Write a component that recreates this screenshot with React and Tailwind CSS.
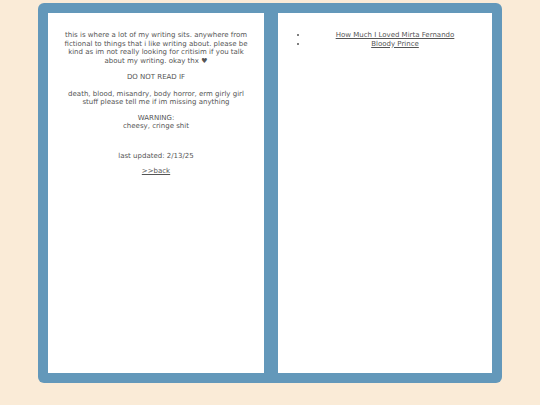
import React from 'react';

const font = { fontFamily: '"DejaVu Sans", "Liberation Sans", sans-serif' };

const stories = ['How Much I Loved Mirta Fernando', 'Bloody Prince'];

export default function App() {
  return (
    <div className="min-h-[405px] w-full bg-[#faebd7] pt-[3px]" style={font}>
      <div className="mx-auto flex h-[380px] w-[464px] gap-[14px] rounded-[6px] bg-[#6398ba] p-[10px]">
        {/* left: about */}
        <div className="w-[216px] shrink-0 bg-white px-[8px] pt-[18px] text-center text-[7px] leading-[8.5px] text-[#555]">
          <p>
            this is where a lot of my writing sits. anywhere from<br />
            fictional to things that i like writing about. please be<br />
            kind as im not really looking for critisim if you talk<br />
            about my writing. okay thx ♥
          </p>
          <p className="mt-[8px]">DO NOT READ IF</p>
          <p className="mt-[8px]">
            death, blood, misandry, body horror, erm girly girl<br />
            stuff please tell me if im missing anything
          </p>
          <p className="mt-[7px]">
            WARNING:<br />
            cheesy, cringe shit
          </p>
          <p className="mt-[21px]">last updated: 2/13/25</p>
          <p className="mt-[7px]">
            <a href="#" className="underline">&gt;&gt;back</a>
          </p>
        </div>

        {/* right: list */}
        <div className="w-[214px] shrink-0 bg-white px-[10px] pt-[18px] text-[7px] leading-[8.5px] text-[#555]">
          <ul className="list-disc pl-[20px] text-center">
            {stories.map((s) => (
              <li key={s}>
                <a href="#" className="underline">{s}</a>
              </li>
            ))}
          </ul>
        </div>
      </div>
    </div>
  );
}
